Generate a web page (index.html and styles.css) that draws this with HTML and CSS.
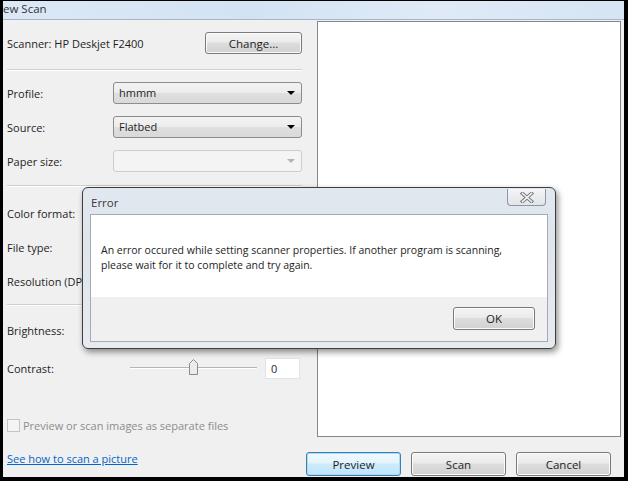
FILE: index.html
```html
<!DOCTYPE html>
<html lang="en">
<head>
<meta charset="UTF-8">
<meta name="viewport" content="width=device-width, initial-scale=1.0">
<title>New Scan</title>
<link rel="stylesheet" href="styles.css">
</head>
<body>
<div class="window">
    <div class="titlebar">ew Scan</div>

    <div class="main">
        <div class="settings">
            <!-- Scanner -->
            <div class="row">
                <span class="label scanner">Scanner: HP Deskjet F2400</span>
                <button class="btn change">Change...</button>
            </div>
            <div class="sep sep-1"></div>

            <!-- Profile / source / paper -->
            <div class="row">
                <span class="label">Profile:</span>
                <div class="combo"><span>hmmm</span><i class="arrow"></i></div>
            </div>
            <div class="row">
                <span class="label">Source:</span>
                <div class="combo"><span>Flatbed</span><i class="arrow"></i></div>
            </div>
            <div class="row">
                <span class="label">Paper size:</span>
                <div class="combo disabled"><span></span><i class="arrow"></i></div>
            </div>
            <div class="sep sep-2"></div>

            <!-- Format (mostly hidden by the message box) -->
            <div class="row">
                <span class="label">Color format:</span>
                <div class="combo"><span></span><i class="arrow"></i></div>
            </div>
            <div class="row">
                <span class="label">File type:</span>
                <div class="combo"><span></span><i class="arrow"></i></div>
            </div>
            <div class="row">
                <span class="label">Resolution (DPI):</span>
                <div class="spin"></div>
            </div>
            <div class="sep sep-3"></div>

            <!-- Adjustments -->
            <div class="row">
                <span class="label">Brightness:</span>
                <div class="slider"><div class="track"><svg class="thumb" width="11" height="18" viewBox="0 0 11 18"><path d="M1.5 5.5 L5.5 1.5 L9.5 5.5 V16.5 H1.5 Z" fill="#ececec" stroke="#8a8a8a"/></svg></div></div>
                <input class="num" type="text" value="" readonly>
            </div>
            <div class="row contrast">
                <span class="label">Contrast:</span>
                <div class="slider"><div class="track"><svg class="thumb" width="11" height="18" viewBox="0 0 11 18"><path d="M1.5 5.5 L5.5 1.5 L9.5 5.5 V16.5 H1.5 Z" fill="#ececec" stroke="#8a8a8a"/></svg></div></div>
                <input class="num" type="text" value="0" readonly>
            </div>

            <label class="check"><span class="box"></span>Preview or scan images as separate files</label>
        </div>

        <div class="preview"></div>
    </div>

    <div class="footer">
        <a class="help" href="#">See how to scan a picture</a>
        <div class="actions">
            <button class="btn default">Preview</button>
            <button class="btn">Scan</button>
            <button class="btn">Cancel</button>
        </div>
    </div>

    <!-- Error message box on top of the scan window -->
    <div class="dialog">
        <div class="dlg-title">Error</div>
        <div class="close">
            <svg width="14" height="11" viewBox="0 0 14 11">
                <path d="M2.5 1.5 L11.5 9.5 M11.5 1.5 L2.5 9.5" stroke="#7c7c7c" stroke-width="3.6" stroke-linecap="square"/>
                <path d="M2.5 1.5 L11.5 9.5 M11.5 1.5 L2.5 9.5" stroke="#f4f4f4" stroke-width="1.6" stroke-linecap="square"/>
            </svg>
        </div>
        <div class="dlg-body">
            <div class="dlg-msg">An error occured while setting scanner properties. If another program is scanning,<br>please wait for it to complete and try again.</div>
            <div class="dlg-buttons">
                <button class="btn ok">OK</button>
            </div>
        </div>
    </div>
</div>
</body>
</html>
```

FILE: styles.css
```css
* {
    box-sizing: border-box;
}
body {
    margin: 0;
    font-family: "Open Sans", "Noto Sans", sans-serif;
    font-size: 11px;
    color: #1e1e1e;
    background-color: #fff;
}
.window {
    position: relative;
    width: 628px;
    height: 481px;
    border-style: solid;
    border-color: #000;
    border-width: 1px 4px 4px 3px;
    background-color: #f0f0f0;
}
.titlebar {
    height: 19px;
    line-height: 16px;
    font-size: 11.5px;
    color: #333;
    background: linear-gradient(90deg, #dce8f5, #d3e3f3 40%, #dfeaf6 70%, #d6e4f3);
    border-bottom: 1px solid #a7b6c7;
}
.main {
    display: flex;
    align-items: flex-start;
    height: 417px;
    padding-right: 3px;
}
.settings {
    width: 299px;
    flex: 0 0 299px;
    padding: 6px 0 0 4px;
}
.preview {
    flex: 0 0 304px;
    height: 416px;
    margin: 1px 0 0 15px;
    border: 1px solid #7f8790;
    background-color: #fff;
}
.row {
    display: flex;
    align-items: center;
    height: 34px;
}
.row.contrast {
    margin-top: 4px;
}
.label {
    flex: 0 0 106px;
    white-space: nowrap;
}
.label.scanner {
    flex: none;
}
.sep {
    border-top: 1px solid #cfcfcf;
    border-bottom: 1px solid #fff;
}
.sep-1 {
    margin: 9px 0 5px;
}
.sep-2 {
    margin: 7px 0 9px;
}
.sep-3 {
    margin: 6px 0 7px;
}
.btn {
    font-family: inherit;
    font-size: 11.5px;
    color: #1e1e1e;
    height: 24px;
    padding: 0;
    border: 1px solid #7a7a7a;
    border-radius: 3px;
    background: linear-gradient(#f4f4f4, #ebebeb 45%, #dddddd 50%, #d1d1d1);
    box-shadow: inset 0 0 0 1px #fbfbfb;
}
.btn.change {
    margin-left: auto;
    width: 97px;
    height: 22px;
}
.combo {
    position: relative;
    width: 189px;
    height: 22px;
    padding-left: 5px;
    line-height: 20px;
    font-size: 11px;
    border: 1px solid #8c8c8c;
    border-radius: 3px;
    background: linear-gradient(#f3f3f3, #ececec 50%, #dfdfdf 51%, #d9d9d9);
}
.combo .arrow {
    position: absolute;
    right: 6px;
    top: 8px;
    border-left: 4px solid transparent;
    border-right: 4px solid transparent;
    border-top: 4px solid #000;
}
.combo.disabled {
    border-color: #cdcdcd;
    background: #f4f4f4;
}
.combo.disabled .arrow {
    border-top-color: #b4b4b4;
}
.spin {
    width: 60px;
    height: 21px;
    border: 1px solid #abadb3;
    background-color: #fff;
}
.slider {
    width: 144px;
    padding-left: 17px;
}
.track {
    position: relative;
    width: 127px;
    height: 2px;
    border-top: 1px solid #b5b5b5;
    border-bottom: 1px solid #fff;
}
.thumb {
    position: absolute;
    left: 58px;
    top: -10px;
}
.num {
    width: 35px;
    height: 21px;
    margin-left: 8px;
    padding: 0 0 0 5px;
    font-family: inherit;
    font-size: 11px;
    color: #1e1e1e;
    border: 1px solid #e2e3ea;
    background-color: #fff;
}
.check {
    display: flex;
    align-items: center;
    height: 18px;
    margin-top: 31px;
    color: #8d8d8d;
}
.box {
    width: 13px;
    height: 13px;
    margin-right: 3px;
    border: 1px solid #c4c4c4;
    background-color: #f4f4f4;
}
.footer {
    display: flex;
    align-items: flex-start;
    height: 40px;
    padding: 0 13px 0 4px;
}
.help {
    margin-top: 13px;
    line-height: 17px;
    color: #0066cc;
    text-decoration: underline;
}
.actions {
    display: flex;
    gap: 10px;
    margin-left: auto;
    margin-top: 15px;
}
.actions .btn {
    width: 95px;
}
.btn.default {
    border-color: #3c7fb1;
    background: linear-gradient(#f1f9fe, #e4f4fd 45%, #cdebfc 50%, #bfe4fb);
    box-shadow: inset 0 0 0 1px #a8dcf6;
}
.dialog {
    position: absolute;
    left: 79px;
    top: 186px;
    width: 474px;
    height: 162px;
    padding: 0 7px 7px;
    border: 1px solid #3e3e3e;
    border-radius: 6px;
    background: linear-gradient(#e2e8ef, #dfe5ec 30%, #e6ebf0);
    box-shadow: 2px 3px 6px rgba(0,0,0,0.45);
}
.dlg-title {
    height: 26px;
    line-height: 30px;
    padding-left: 1px;
    font-size: 11.5px;
    color: #3a3a3a;
}
.close {
    position: absolute;
    right: 9px;
    top: 1px;
    display: flex;
    align-items: center;
    justify-content: center;
    width: 39px;
    height: 17px;
    border: 1px solid #8d96a2;
    border-top: none;
    border-radius: 0 0 4px 4px;
    background: linear-gradient(#f3f4f6, #e2e5e9);
}
.dlg-body {
    height: 128px;
    border: 1px solid #a3acb6;
    background-color: #fff;
}
.dlg-msg {
    height: 82px;
    padding: 28px 10px 0;
    font-size: 10.5px;
    line-height: 15px;
}
.dlg-buttons {
    display: flex;
    justify-content: flex-end;
    height: 44px;
    padding: 10px 12px 0 0;
    background-color: #f0f0f0;
}
.btn.ok {
    width: 82px;
    height: 23px;
}
```
